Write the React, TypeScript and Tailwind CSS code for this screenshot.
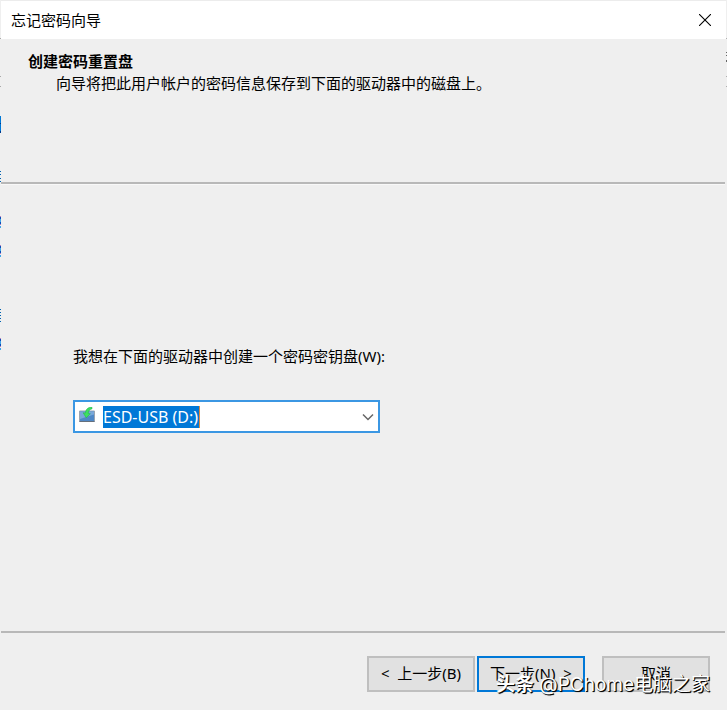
import { useState } from 'react';

const DRIVES = ['ESD-USB (D:)'];

const BUTTON = 'h-9 w-[108px] pb-[2px] bg-[#e1e1e1] text-center whitespace-pre';

// 驱动器图标
const DriveIcon = () => (
  <svg className="w-4 h-4 mb-1 shrink-0" viewBox="0 0 16 16" fill="none" aria-hidden="true">
    <path d="M0.5 4 H15.5 V14.5 H0.5 Z" fill="#4f88c6" stroke="#9aa5b1" />
    <path d="M1 4.5 H15 V7.5 L1 12 Z" fill="#79a8da" />
    <path d="M0.5 14.5 H15.5" stroke="#66707c" />
    <path
      d="M13 0.3 C9 0.2 6.7 2.2 6.5 6 L4.2 5.8 L7.2 10.8 L11.3 6.8 L9.2 6.4 C9.3 4 10.5 2.4 13 1.8 Z"
      fill="#3ee05f"
      stroke="#22b54a"
      strokeWidth="0.6"
    />
  </svg>
);

// 窗口左侧露出的背景内容
const BackgroundEdge = () => (
  <svg className="absolute left-0 top-0 w-px h-[360px]" viewBox="0 0 1 360" aria-hidden="true">
    <path d="M0.5 38v1M0.5 76v1M0.5 86v1" stroke="#a8a8a8" />
    <path d="M0.5 116v17" stroke="#0078d7" />
    <path d="M0.5 123v1M0.5 131v2" stroke="#003a8c" />
    <path d="M0.5 171v1M0.5 174v1M0.5 178v1M0.5 181v1" stroke="#0063b1" />
    <path d="M0.5 216v1M0.5 224v1M0.5 245v1M0.5 253v1M0.5 338v1M0.5 346v1" stroke="#b47fc0" />
    <path d="M0.5 217v2M0.5 222v2M0.5 246v2M0.5 251v2M0.5 339v2M0.5 344v2" stroke="#0b50b8" />
    <path d="M0.5 219v3M0.5 226v2M0.5 248v3M0.5 255v2M0.5 341v3M0.5 348v2" stroke="#42a5e8" />
    <path d="M0.5 309v1M0.5 312v1M0.5 315v1M0.5 318v1M0.5 321v1" stroke="#0063b1" />
  </svg>
);

const RightEdge = () => (
  <svg className="absolute right-0 top-0 w-px h-24" viewBox="0 0 1 96" aria-hidden="true">
    <path d="M0.5 38v1M0.5 76v1M0.5 86v1" stroke="#b0b0b0" />
    <path d="M0.5 52v1M0.5 55v1M0.5 60v2" stroke="#666666" />
  </svg>
);

const App = () => {
  const [drive, setDrive] = useState(DRIVES[0]);

  return (
    <div
      className="relative min-h-screen flex flex-col bg-[#efefef] text-black text-[15px] leading-[22px]
                 font-['Noto_Sans','Noto_Sans_CJK_SC',sans-serif]"
    >
      <BackgroundEdge />
      <RightEdge />

      {/* 标题栏 */}
      <header className="h-[39px] mx-px pl-[10px] pr-[13px] pb-px flex items-center justify-between bg-white border-t border-[#ececec]">
        <h1>忘记密码向导</h1>
        <button type="button" aria-label="关闭" className="w-4 h-4 flex items-center justify-center">
          <svg className="w-3 h-3" viewBox="0 0 12 12" fill="none" stroke="#000000" strokeWidth="1.1">
            <path d="M0 0 L12 12 M12 0 L0 12" />
          </svg>
        </button>
      </header>

      {/* 说明 */}
      <section className="h-[145px] ml-px mr-[2px] pl-[27px] pt-3 border-b-2 border-[#b8b8b8]">
        <h2 className="font-bold leading-[21px]">创建密码重置盘</h2>
        <p className="pl-7">向导将把此用户帐户的密码信息保存到下面的驱动器中的磁盘上。</p>
      </section>

      {/* 选择驱动器 */}
      <main className="grow ml-px mr-[2px] pl-[72px] pt-40 border-t border-[#f8f8f8]">
        <label htmlFor="drive" className="block">
          我想在下面的驱动器中创建一个密码密钥盘(W):
        </label>
        <div className="mt-[33px] w-[307px] h-[33px] pl-1 pr-1 flex items-center bg-white border-2 border-[#3b97e3]">
          <DriveIcon />
          <select
            id="drive"
            value={drive}
            onChange={(e) => setDrive(e.target.value)}
            className="ml-2 h-[22px] appearance-none bg-[#0078d7] text-white text-base leading-[22px] border-r border-[#e08a3c] outline-none"
          >
            {DRIVES.map((name) => (
              <option key={name}>{name}</option>
            ))}
          </select>
          <svg className="ml-auto w-3 h-3" viewBox="0 0 12 12" fill="none" stroke="#666666" strokeWidth="1.5" aria-hidden="true">
            <path d="M1 3.5 L6 8.5 L11 3.5" />
          </svg>
        </div>
      </main>

      {/* 底部按钮 */}
      <footer className="relative h-[79px] ml-px mr-[2px] pr-[15px] pt-[23px] flex justify-end items-start border-t-2 border-[#b8b8b8]">
        <button type="button" className={`${BUTTON} border-2 border-[#bfbfbf]`}>
          {'<  上一步(B)'}
        </button>
        <button type="button" className={`${BUTTON} ml-[2px] border-2 border-[#0078d7]`}>
          {'下一步(N)  >'}
        </button>
        <button type="button" className={`${BUTTON} ml-[17px] border-2 border-[#bfbfbf]`}>
          取消
        </button>

        {/* 水印 */}
        <p className="absolute right-[15px] bottom-[11px] text-[19px] leading-7 whitespace-nowrap text-white pointer-events-none [text-shadow:1px_1px_1px_#000,1px_1px_0_#222] font-['Inter','Noto_Sans_CJK_SC',sans-serif]">
          <span className="font-bold">头条</span> @PChome电脑之家
        </p>
      </footer>
    </div>
  );
};

export default App;
